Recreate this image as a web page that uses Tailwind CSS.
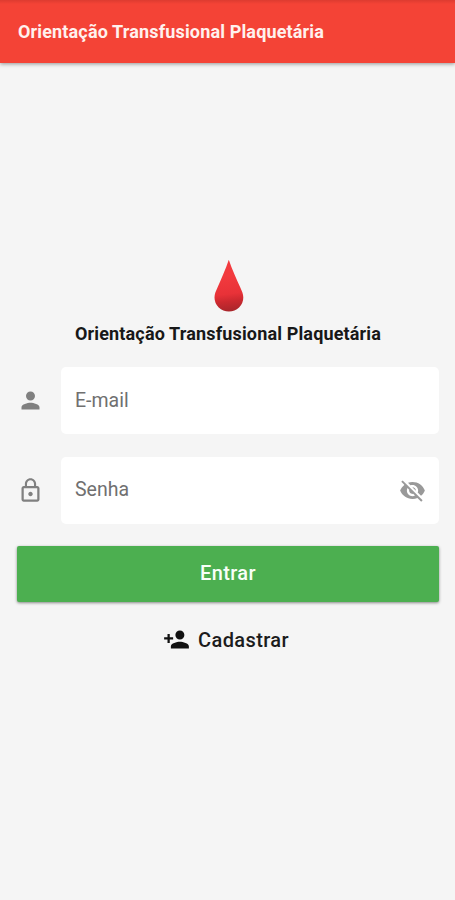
<!DOCTYPE html>
<html lang="pt-BR">
<head>
<meta charset="utf-8">
<title>Orientação Transfusional Plaquetária</title>
<script src="https://cdn.jsdelivr.net/npm/@tailwindcss/browser@4"></script>
</head>
<body class="flex h-[900px] w-[455px] flex-col overflow-hidden bg-[#f5f5f5] font-['Roboto',sans-serif]">
  <header class="flex h-[62.5px] shrink-0 items-center bg-[#f44336] bg-linear-to-b from-[#dd3b30] to-[#f44336] to-[4px] pt-[2px] pl-[18px] shadow-[0_1px_4px_rgba(0,0,0,0.4)]">
    <h1 class="whitespace-nowrap text-[18px] leading-6 font-bold tracking-[0.15px] text-[#fff1ee]">Orientação Transfusional Plaquetária</h1>
  </header>
  <main class="flex flex-col pr-4 pl-[17px] pt-[196.500px]">
    <svg class="ml-[197px] h-[53px] w-[30px]" viewBox="0 0 30 53">
      <defs>
        <linearGradient id="drop" x1="0.45" y1="0" x2="0.52" y2="1">
          <stop offset="0.3" stop-color="#f23a3e"/>
          <stop offset="0.66" stop-color="#e83238"/>
          <stop offset="0.8" stop-color="#cc292f"/>
          <stop offset="1" stop-color="#a8262b"/>
        </linearGradient>
      </defs>
      <path fill="url(#drop)" d="M14.800.8C18 10.500 22.500 20 26.300 28.500 28 32.300 29.300 35 29.300 38.600A14.400 14 0 0 1 .5 38.600C.5 35 1.800 32.300 3.500 28.500 7.200 20 11.600 10.500 14.800.8Z"/>
    </svg>
    <h2 class="mt-[10px] ml-[58px] whitespace-nowrap text-[18px] leading-6 font-bold tracking-[0.15px] text-[#181818]">Orientação Transfusional Plaquetária</h2>
    <div class="mt-[21px] flex items-center gap-[17px]">
      <svg class="size-[27px] fill-[#808080]" viewBox="0 0 24 24"><path d="M12 12c2.210 0 4-1.790 4-4s-1.790-4-4-4-4 1.790-4 4 1.790 4 4 4zm0 2c-2.670 0-8 1.340-8 4v2h16v-2c0-2.660-5.330-4-8-4z"/></svg>
      <div class="flex h-[67px] flex-1 items-center rounded-[5px] bg-white px-[14px] text-[19.5px] text-[#707070]">E-mail</div>
    </div>
    <div class="mt-[22.500px] flex items-center gap-[17px]">
      <svg class="size-[27px] fill-[#808080]" viewBox="0 0 24 24"><path d="M12 17c1.100 0 2-.9 2-2s-.9-2-2-2-2 .9-2 2 .9 2 2 2zm6-9h-1V6c0-2.760-2.240-5-5-5S7 3.240 7 6v2H6c-1.100 0-2 .9-2 2v10c0 1.100.9 2 2 2h12c1.100 0 2-.9 2-2V10c0-1.100-.9-2-2-2zM8.900 6c0-1.710 1.390-3.100 3.100-3.100s3.100 1.390 3.100 3.100v2H8.900V6zM18 20H6V10h12v10z"/></svg>
      <div class="flex h-[67px] flex-1 items-center justify-between rounded-[5px] bg-white pr-[13px] pl-[14px] text-[19.5px] text-[#707070]"><span>Senha</span>
        <svg class="size-[27px] fill-[#999999]" viewBox="0 0 24 24"><path d="M12 7c2.760 0 5 2.240 5 5 0 .65-.13 1.260-.36 1.830l2.920 2.920c1.510-1.260 2.700-2.890 3.430-4.750-1.730-4.390-6-7.500-11-7.500-1.400 0-2.740.25-3.980.7l2.160 2.160C10.740 7.130 11.350 7 12 7zM2 4.270l2.280 2.280.46.46C3.080 8.300 1.780 10.020 1 12c1.730 4.390 6 7.500 11 7.500 1.550 0 3.030-.3 4.380-.84l.42.42L19.730 22 21 20.730 3.270 3 2 4.270zM7.530 9.800l1.550 1.550c-.05.21-.08.43-.08.65 0 1.660 1.340 3 3 3 .22 0 .44-.03.65-.08l1.550 1.550c-.67.33-1.410.53-2.200.53-2.760 0-5-2.240-5-5 0-.79.2-1.530.53-2.200zm4.310-.78l3.150 3.150.02-.16c0-1.660-1.340-3-3-3l-.17.01z"/></svg>
      </div>
    </div>
    <button class="mt-[22px] h-[56px] rounded-[2px] bg-[#4caf50] pb-px text-[20px] font-medium tracking-[0.35px] text-[#f8fff8] shadow-[0_1px_3px_rgba(0,0,0,0.45)]">Entrar</button>
    <button class="mt-[24px] ml-[146px] flex h-7 items-center gap-2 text-[20px] font-medium tracking-[0.4px] text-[#1c1c1c]">
      <svg class="size-[27px] fill-[#111]" viewBox="0 0 24 24"><path d="M15 12c2.210 0 4-1.790 4-4s-1.790-4-4-4-4 1.790-4 4 1.790 4 4 4zm-9-2V7H4v3H1v2h3v3h2v-3h3v-2H6zm9 4c-2.670 0-8 1.340-8 4v2h16v-2c0-2.660-5.330-4-8-4z"/></svg>
      Cadastrar
    </button>
  </main>
</body>
</html>
